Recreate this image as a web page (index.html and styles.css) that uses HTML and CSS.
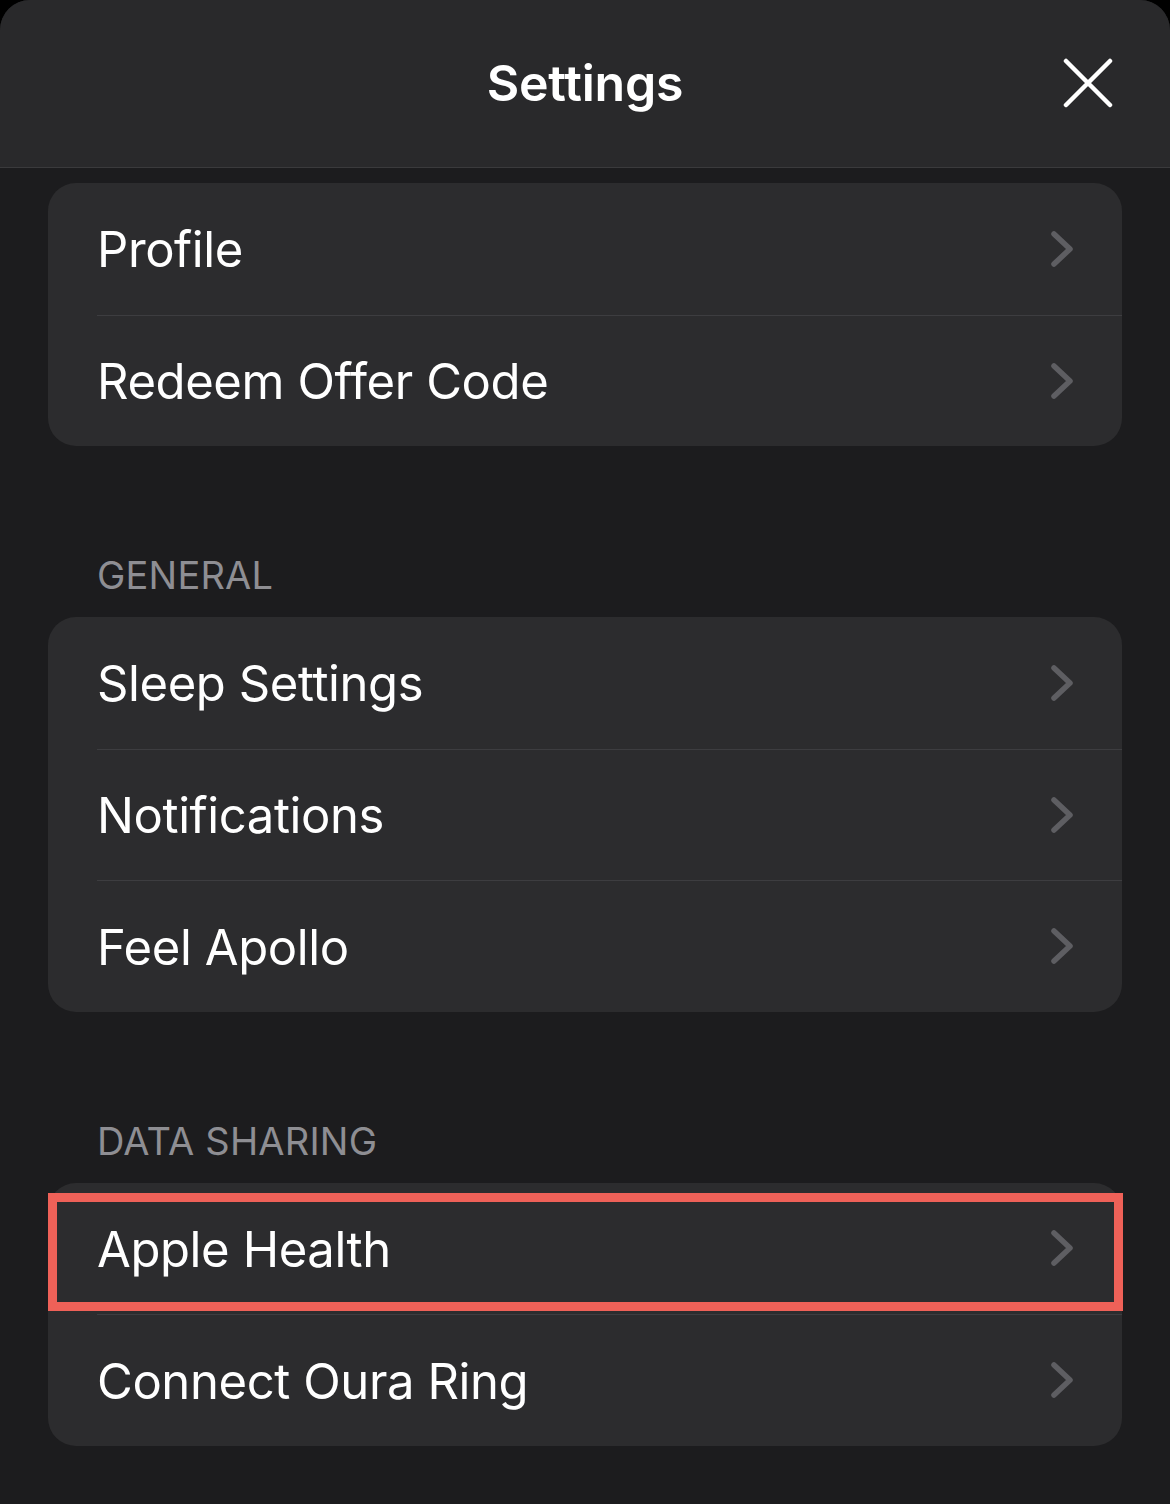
FILE: index.html
```html
<!DOCTYPE html>
<html lang="en">
<head>
<meta charset="utf-8">
<title>Settings</title>
<link rel="stylesheet" href="styles.css">
</head>
<body>
<div class="sheet">
  <header class="topbar">
    <h1 class="title">Settings</h1>
    <button class="close" aria-label="Close">
      <svg width="50" height="50" viewBox="0 0 50 50"><path d="M3 3 L47 47 M47 3 L3 47" stroke="#fff" stroke-width="4.5" stroke-linecap="round" fill="none"/></svg>
    </button>
  </header>

  <main class="content">
    <section class="card">
      <div class="row"><div class="row-inner"><span class="label">Profile</span><svg class="chev" viewBox="0 0 22 36"><path d="M3 3 L19 18 L3 33"/></svg></div></div>
      <div class="row"><div class="row-inner sep"><span class="label">Redeem Offer Code</span><svg class="chev" viewBox="0 0 22 36"><path d="M3 3 L19 18 L3 33"/></svg></div></div>
    </section>

    <h2 class="section-title">GENERAL</h2>
    <section class="card">
      <div class="row"><div class="row-inner"><span class="label">Sleep Settings</span><svg class="chev" viewBox="0 0 22 36"><path d="M3 3 L19 18 L3 33"/></svg></div></div>
      <div class="row"><div class="row-inner sep"><span class="label">Notifications</span><svg class="chev" viewBox="0 0 22 36"><path d="M3 3 L19 18 L3 33"/></svg></div></div>
      <div class="row"><div class="row-inner sep"><span class="label">Feel Apollo</span><svg class="chev" viewBox="0 0 22 36"><path d="M3 3 L19 18 L3 33"/></svg></div></div>
    </section>

    <h2 class="section-title">DATA SHARING</h2>
    <section class="card">
      <div class="row highlighted"><div class="row-inner"><span class="label">Apple Health</span><svg class="chev" viewBox="0 0 22 36"><path d="M3 3 L19 18 L3 33"/></svg></div><div class="mark"></div></div>
      <div class="row"><div class="row-inner sep"><span class="label">Connect Oura Ring</span><svg class="chev" viewBox="0 0 22 36"><path d="M3 3 L19 18 L3 33"/></svg></div></div>
    </section>
  </main>
</div>
</body>
</html>
```

FILE: styles.css
```css
html, body {
  margin: 0;
  padding: 0;
  background: #000;
}
body {
  font-family: Inter, "Noto Sans", "Liberation Sans", sans-serif;
  color: #fff;
}
.sheet {
  width: 1170px;
  height: 1504px;
  background: #1c1c1e;
  border-radius: 30px 30px 0 0;
  overflow: hidden;
}
.topbar {
  height: 167px;
  border-bottom: 1px solid #3a3a3c;
  background: #29292b;
  display: flex;
  align-items: center;
  justify-content: center;
  position: relative;
}
.title {
  margin: 0;
  font-size: 50px;
  font-weight: 600;
  letter-spacing: -0.2px;
  margin-top: -2px;
}
.close {
  position: absolute;
  right: 57px;
  top: 58px;
  width: 50px;
  height: 50px;
  padding: 0;
  border: 0;
  background: none;
  display: block;
}
.close svg { display: block; }
.content {
  padding: 15px 48px 0 48px;
}
.card {
  background: #2c2c2e;
  border-radius: 28px;
}
.row {
  height: 131.5px;
  padding-left: 49px;
  position: relative;
}
.row-inner {
  height: 100%;
  box-sizing: border-box;
  display: flex;
  align-items: center;
  justify-content: space-between;
  padding-right: 49px;
}
.row-inner.sep {
  border-top: 1px solid #3d3d40;
}
.label {
  font-size: 49px;
  letter-spacing: -0.4px;
  margin-top: 2px;
}
.chev {
  width: 22px;
  height: 36px;
  display: block;
  fill: none;
  stroke: #5e5e62;
  stroke-width: 5.5;
  stroke-linecap: round;
  stroke-linejoin: round;
}
.section-title {
  margin: 106px 0 19px 49px;
  font-size: 38px;
  line-height: 46px;
  font-weight: 400;
  color: #8e8e93;
  letter-spacing: 0.2px;
}
.mark {
  position: absolute;
  left: 0;
  right: -1px;
  top: 10px;
  bottom: 3px;
  border: 9px solid #ef6158;
  pointer-events: none;
}
```
